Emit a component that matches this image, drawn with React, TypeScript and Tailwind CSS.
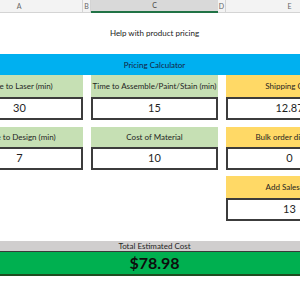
import React from "react";

const cols = "grid grid-cols-[127px_8px_127px_8px_127px]";

function Label({ text, color }: { text: string; color: "green" | "yellow" }) {
  return (
    <div
      className={`flex items-center justify-center whitespace-nowrap overflow-hidden text-[8px] text-[#1f1f1f] ${
        color === "green" ? "bg-[#c6e0b4]" : "bg-[#ffd966]"
      }`}
    >
      {text}
    </div>
  );
}

function Box({ value }: { value: string }) {
  return (
    <div className="flex items-center justify-center border-2 border-[#3c3c3c] bg-white text-[11px] text-[#1f1f1f]">
      {value}
    </div>
  );
}

export default function App() {
  return (
    <div
      className="w-[300px] h-[300px] overflow-hidden bg-white"
      style={{ fontFamily: "Lato, 'Open Sans', sans-serif" }}
    >
      <div className="ml-[-44px] w-[397px] flex flex-col">
        {/* column headers */}
        <div className={`${cols} h-[11px] text-[7px] text-[#666]`}>
          <div className="flex items-center justify-center bg-[#f3f3f3] border-r border-b border-[#d4d4d4]">A</div>
          <div className="flex items-center justify-center bg-[#f3f3f3] border-r border-b border-[#d4d4d4]">B</div>
          <div className="flex items-center justify-center bg-[#d9d9d9] border-b-2 border-[#217346] text-[#444]">C</div>
          <div className="flex items-center justify-center bg-[#f3f3f3] border-r border-b border-[#d4d4d4]">D</div>
          <div className="flex items-center justify-center bg-[#f3f3f3] border-b border-[#d4d4d4]">E</div>
        </div>

        {/* title */}
        <div className="h-[43px] flex items-center justify-center text-[8px] text-[#1a1a1a]">
          Help with product pricing
        </div>

        {/* blue bar */}
        <div className="h-[21px] bg-[#00b0f0] flex items-center justify-center text-[8px] text-[#14213d]">
          Pricing Calculator
        </div>

        {/* row 1 labels */}
        <div className={`${cols} h-[22px]`}>
          <Label text="Time to Laser (min)" color="green" />
          <div />
          <Label text="Time to Assemble/Paint/Stain (min)" color="green" />
          <div />
          <Label text="Shipping Cost" color="yellow" />
        </div>
        <div className={`${cols} h-[23px]`}>
          <Box value="30" />
          <div />
          <Box value="15" />
          <div />
          <Box value="12.87" />
        </div>

        <div className="h-[7px]" />

        {/* row 2 labels */}
        <div className={`${cols} h-[20px]`}>
          <Label text="Time to Design (min)" color="green" />
          <div />
          <Label text="Cost of Material" color="green" />
          <div />
          <Label text="Bulk order discount" color="yellow" />
        </div>
        <div className={`${cols} h-[23px]`}>
          <Box value="7" />
          <div />
          <Box value="10" />
          <div />
          <Box value="0" />
        </div>

        <div className="h-[6px]" />

        {/* row 3 */}
        <div className={`${cols} h-[22px]`}>
          <div />
          <div />
          <div />
          <div />
          <Label text="Add Sales Tax" color="yellow" />
        </div>
        <div className={`${cols} h-[23px]`}>
          <div />
          <div />
          <div />
          <div />
          <Box value="13" />
        </div>

        <div className="h-[20px]" />

        {/* total */}
        <div className="h-[11px] bg-[#d0cece] border-b border-[#3a3a3a] flex items-center justify-center text-[8px] text-[#1f1f1f]">
          Total Estimated Cost
        </div>
        <div className="h-[24px] bg-[#00b050] border-b-2 border-[#1e4d20] flex items-center justify-center text-[16px] font-bold text-[#0d0d0d]">
          $78.98
        </div>
      </div>
    </div>
  );
}
